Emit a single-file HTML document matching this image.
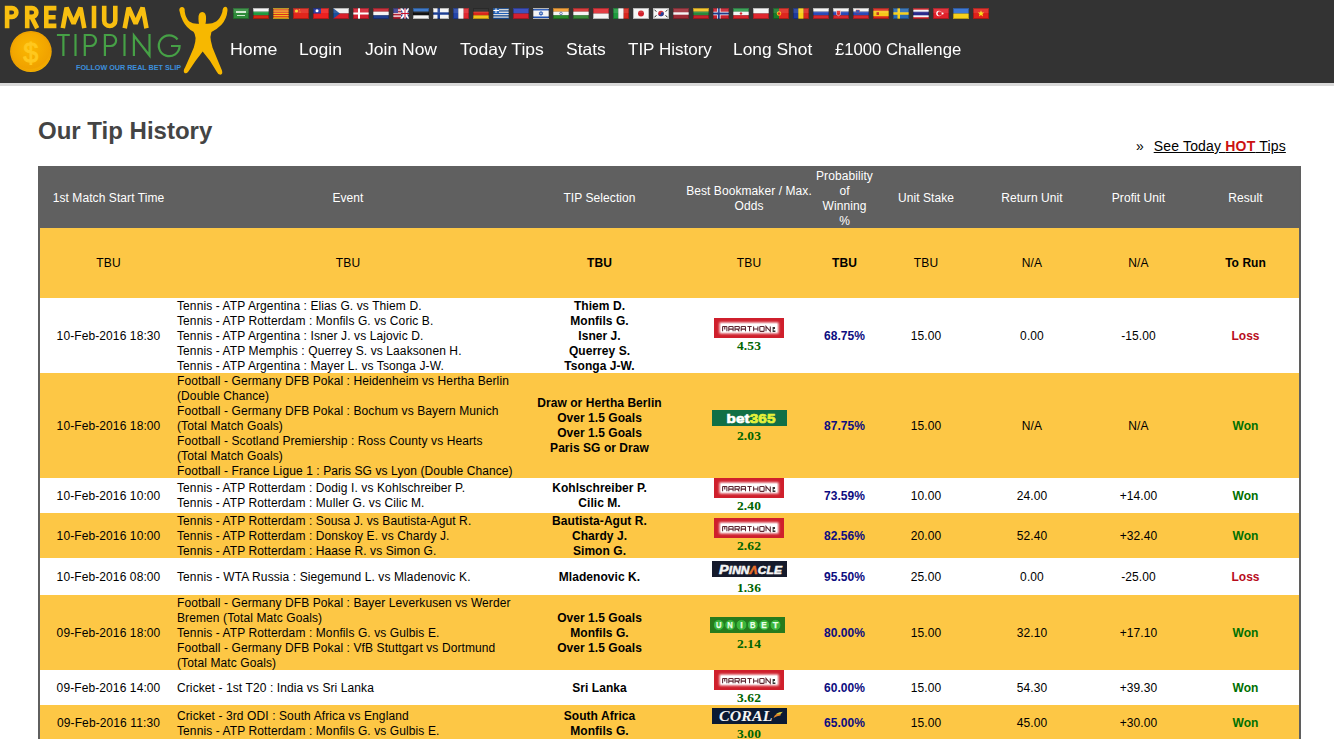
<!DOCTYPE html>
<html><head><meta charset="utf-8"><title>Our Tip History</title>
<style>
*{margin:0;padding:0;box-sizing:border-box}
html,body{width:1334px;height:739px;overflow:hidden;background:#fff;font-family:"Liberation Sans", sans-serif}
#hdr{position:absolute;left:0;top:0;width:1334px;height:83px;background:#333333}
#hline{position:absolute;left:0;top:83px;width:1334px;height:3px;background:#d9d9d9}
.fl{position:absolute;top:8px}
.nv{position:absolute;top:38px;font-size:16.5px;line-height:22px;color:#fff;white-space:nowrap;transform-origin:0 0}
#logo{position:absolute;left:0;top:0}
h1{position:absolute;left:38px;top:116px;font-size:24px;line-height:30px;font-weight:bold;color:#444}
#hot{position:absolute;left:1136px;top:137px;font-size:14px;line-height:18px;color:#000;white-space:nowrap}
#hot a{color:#000;text-decoration:underline;margin-left:6px;letter-spacing:.18px}
#hot b{color:#cc1111}
#tbl{position:absolute;left:38px;top:166px;border-collapse:separate;border-spacing:0;table-layout:fixed;width:1263px;border-left:2px solid #5f5f5f;border-right:2px solid #5f5f5f}
#tbl td,#tbl th{font-size:12px;line-height:15px;text-align:center;vertical-align:top;padding:0;white-space:nowrap;font-weight:normal}
#tbl th{background:#606060;color:#fff;height:62px}
#tbl tr{box-sizing:border-box}
.ry td{background:#fdc745}
.rw td{background:#fff}
#tbl td{color:#000;letter-spacing:.1px}
#tbl th{letter-spacing:.08px}
#tbl td.b,#tbl td.won,#tbl td.loss,#tbl td.pr{letter-spacing:.05px}
#tbl td.ev{text-align:left}
#tbl td.b{font-weight:bold}
#tbl .odds{font-weight:bold;color:#006400;font-family:"Liberation Serif",serif;font-size:13.5px;top:0px}
.c{position:relative;top:1px}
#tbl .p2{padding-left:2px}
#tbl td.pr{font-weight:bold;color:#0c0c80}
#tbl td.won{font-weight:bold;color:#007000}
#tbl td.loss{font-weight:bold;color:#b80c1c}
</style></head><body>
<div id="hdr"><svg id="logo" width="235" height="83" viewBox="0 0 235 83">
<g fill="none" stroke="#f8bf10" stroke-width="4.6" stroke-linejoin="miter" stroke-miterlimit="2">
<path d="M7.1 28.2V8.1H12A4.4 4.4 0 0 1 12 16.9H7.1"/>
<path d="M27.2 28.2V8.1H32A4.4 4.4 0 0 1 32 16.9H27.2M31.5 17L37.2 28.2"/>
<path d="M56.4 8.1H46.3V25.9H56.4M46.3 17.2H55.6"/>
<path d="M62.8 28.2L66.6 7.6L73.6 23.6L80.5 7.6L84.3 28.2"/>
<path d="M94 5.8V28.2"/>
<path d="M104.2 5.8V20.5A5.55 5.55 0 0 0 115.3 20.5V5.8"/>
<path d="M124.7 28.2L128.6 7.6L135.6 23.6L142.6 7.6L146.5 28.2"/>
</g>
<g fill="none" stroke="#46a046" stroke-width="2.2">
<path d="M56.9 35H69.8M63.4 35V56"/>
<path d="M75.5 34V56"/>
<path d="M84.8 56V35H90.5A5.5 5.5 0 0 1 90.5 46H84.8"/>
<path d="M104.9 56V35H110.6A5.5 5.5 0 0 1 110.6 46H104.9"/>
<path d="M124.5 34V56"/>
<path d="M133.9 56V35.5L149.5 55.5V34"/>
<path d="M177.5 39.5A10.4 10.4 0 1 0 179.6 46H171"/>
</g>
<defs><radialGradient id="cg" cx="45%" cy="40%" r="60%"><stop offset="0" stop-color="#fbb800"/><stop offset=".85" stop-color="#f0a200"/><stop offset="1" stop-color="#f7b400"/></radialGradient></defs>
<ellipse cx="30.9" cy="51.5" rx="20.8" ry="20.5" fill="url(#cg)"/>
<ellipse cx="30.9" cy="51.5" rx="19.6" ry="19.3" fill="none" stroke="#e89a00" stroke-width=".8" opacity=".6"/>
<text x="30.8" y="61.5" text-anchor="middle" font-family="Liberation Sans" font-size="27" fill="#ffc81e" stroke="#ffc81e" stroke-width=".9" textLength="15" lengthAdjust="spacingAndGlyphs">$</text>
<text x="76" y="70" font-family="Liberation Sans" font-weight="bold" font-size="7.6" fill="#3d8fdc" textLength="105" lengthAdjust="spacingAndGlyphs">FOLLOW OUR REAL BET SLIP</text>
<svg x="175" y="2" width="60" height="78" viewBox="0 0 568 739"><path fill="#f7b800" d="M40 75Q45 45 70 48Q95 52 92 90Q100 150 135 185Q175 212 228 205Q222 185 222 160Q220 95 258 95Q296 95 294 160Q294 185 288 205Q345 212 390 185Q430 155 448 95Q450 50 475 45Q500 48 497 80Q490 160 440 215Q395 260 345 285Q330 330 340 370Q350 410 355 430Q400 540 445 650Q455 685 430 690Q410 690 395 660Q340 560 262 470Q190 560 125 660Q105 685 88 670Q75 650 95 620Q140 520 178 430Q195 380 195 340Q190 300 175 282Q110 250 75 180Q50 130 40 75Z"/></svg>
</svg><svg class="fl" style="left:233px" width="16" height="11" viewBox="0 0 16 11"><rect width="16" height="11" fill="#0b0"/><rect width="16" height="11" fill="#2e8b3a"/><rect x="3" y="3" width="10" height="2" fill="#cfe8cf"/><rect x="4" y="7" width="8" height="1" fill="#cfe8cf"/><rect width="16" height="5" fill="#fff" opacity=".1"/><rect x=".5" y=".5" width="15" height="10" fill="none" stroke="#000" stroke-opacity=".25"/></svg><svg class="fl" style="left:253px" width="16" height="11" viewBox="0 0 16 11"><rect y="0.00" width="16" height="3.72" fill="#f4f4f4"/><rect y="3.67" width="16" height="3.72" fill="#1f9a3f"/><rect y="7.33" width="16" height="3.72" fill="#d62612"/><rect width="16" height="5" fill="#fff" opacity=".1"/><rect x=".5" y=".5" width="15" height="10" fill="none" stroke="#000" stroke-opacity=".25"/></svg><svg class="fl" style="left:273px" width="16" height="11" viewBox="0 0 16 11"><rect width="16" height="11" fill="#f8c81e"/><rect y="1.30" width="16" height="1.2" fill="#d83020"/><rect y="3.60" width="16" height="1.2" fill="#d83020"/><rect y="5.90" width="16" height="1.2" fill="#d83020"/><rect y="8.20" width="16" height="1.2" fill="#d83020"/><rect width="16" height="5" fill="#fff" opacity=".1"/><rect x=".5" y=".5" width="15" height="10" fill="none" stroke="#000" stroke-opacity=".25"/></svg><svg class="fl" style="left:293px" width="16" height="11" viewBox="0 0 16 11"><rect width="16" height="11" fill="#e0261c"/><circle cx="3.5" cy="3" r="1.6" fill="#f8d020"/><circle cx="6.5" cy="1.8" r=".5" fill="#f8d020"/><circle cx="7" cy="4" r=".5" fill="#f8d020"/><rect width="16" height="5" fill="#fff" opacity=".1"/><rect x=".5" y=".5" width="15" height="10" fill="none" stroke="#000" stroke-opacity=".25"/></svg><svg class="fl" style="left:313px" width="16" height="11" viewBox="0 0 16 11"><rect width="16" height="11" fill="#ec2020"/><rect width="8" height="5.5" fill="#1a2b9a"/><circle cx="4" cy="2.75" r="1.5" fill="#fff"/><rect width="16" height="5" fill="#fff" opacity=".1"/><rect x=".5" y=".5" width="15" height="10" fill="none" stroke="#000" stroke-opacity=".25"/></svg><svg class="fl" style="left:333px" width="16" height="11" viewBox="0 0 16 11"><rect width="16" height="5.5" fill="#f0f0f0"/><rect y="5.5" width="16" height="5.5" fill="#d81e2a"/><path d="M0 0L7 5.5L0 11Z" fill="#1b4f9a"/><rect width="16" height="5" fill="#fff" opacity=".1"/><rect x=".5" y=".5" width="15" height="10" fill="none" stroke="#000" stroke-opacity=".25"/></svg><svg class="fl" style="left:353px" width="16" height="11" viewBox="0 0 16 11"><rect width="16" height="11" fill="#d32030"/><rect x="5" width="2" height="11" fill="#fff"/><rect y="4.5" width="16" height="2" fill="#fff"/><rect width="16" height="5" fill="#fff" opacity=".1"/><rect x=".5" y=".5" width="15" height="10" fill="none" stroke="#000" stroke-opacity=".25"/></svg><svg class="fl" style="left:373px" width="16" height="11" viewBox="0 0 16 11"><rect y="0.00" width="16" height="3.72" fill="#c21e2a"/><rect y="3.67" width="16" height="3.72" fill="#f4f4f4"/><rect y="7.33" width="16" height="3.72" fill="#1f3f8e"/><rect width="16" height="5" fill="#fff" opacity=".1"/><rect x=".5" y=".5" width="15" height="10" fill="none" stroke="#000" stroke-opacity=".25"/></svg><svg class="fl" style="left:393px" width="16" height="11" viewBox="0 0 16 11"><rect width="16" height="11" fill="#d9d9ee"/><rect width="8" height="11" fill="#b22234"/><rect y="1.5" width="8" height="1.2" fill="#fff"/><rect y="4.5" width="8" height="1.2" fill="#fff"/><rect y="7.5" width="8" height="1.2" fill="#fff"/><rect width="5" height="5" fill="#3c3b8e"/><rect x="8" width="8" height="11" fill="#283c8c"/><path d="M8 0L16 11M16 0L8 11" stroke="#fff" stroke-width="2"/><rect x="11" width="2" height="11" fill="#fff"/><rect x="8" y="4.5" width="8" height="2" fill="#fff"/><rect x="11.5" width="1" height="11" fill="#c8102e"/><rect x="8" y="5" width="8" height="1" fill="#c8102e"/><rect width="16" height="5" fill="#fff" opacity=".1"/><rect x=".5" y=".5" width="15" height="10" fill="none" stroke="#000" stroke-opacity=".25"/></svg><svg class="fl" style="left:413px" width="16" height="11" viewBox="0 0 16 11"><rect y="0.00" width="16" height="3.72" fill="#2b6cc4"/><rect y="3.67" width="16" height="3.72" fill="#111"/><rect y="7.33" width="16" height="3.72" fill="#f4f4f4"/><rect width="16" height="5" fill="#fff" opacity=".1"/><rect x=".5" y=".5" width="15" height="10" fill="none" stroke="#000" stroke-opacity=".25"/></svg><svg class="fl" style="left:433px" width="16" height="11" viewBox="0 0 16 11"><rect width="16" height="11" fill="#f4f4f4"/><rect x="4.5" width="2.5" height="11" fill="#1c3f94"/><rect y="4.25" width="16" height="2.5" fill="#1c3f94"/><rect width="16" height="5" fill="#fff" opacity=".1"/><rect x=".5" y=".5" width="15" height="10" fill="none" stroke="#000" stroke-opacity=".25"/></svg><svg class="fl" style="left:453px" width="16" height="11" viewBox="0 0 16 11"><rect x="0.00" width="5.38" height="11" fill="#2445a8"/><rect x="5.33" width="5.38" height="11" fill="#f4f4f4"/><rect x="10.67" width="5.38" height="11" fill="#e0262e"/><rect width="16" height="5" fill="#fff" opacity=".1"/><rect x=".5" y=".5" width="15" height="10" fill="none" stroke="#000" stroke-opacity=".25"/></svg><svg class="fl" style="left:473px" width="16" height="11" viewBox="0 0 16 11"><rect y="0.00" width="16" height="3.72" fill="#222"/><rect y="3.67" width="16" height="3.72" fill="#d8261a"/><rect y="7.33" width="16" height="3.72" fill="#f2c21a"/><rect width="16" height="5" fill="#fff" opacity=".1"/><rect x=".5" y=".5" width="15" height="10" fill="none" stroke="#000" stroke-opacity=".25"/></svg><svg class="fl" style="left:493px" width="16" height="11" viewBox="0 0 16 11"><rect y="0.00" width="16" height="1.27" fill="#1e5fb8"/><rect y="1.22" width="16" height="1.27" fill="#f4f4f4"/><rect y="2.44" width="16" height="1.27" fill="#1e5fb8"/><rect y="3.67" width="16" height="1.27" fill="#f4f4f4"/><rect y="4.89" width="16" height="1.27" fill="#1e5fb8"/><rect y="6.11" width="16" height="1.27" fill="#f4f4f4"/><rect y="7.33" width="16" height="1.27" fill="#1e5fb8"/><rect y="8.56" width="16" height="1.27" fill="#f4f4f4"/><rect y="9.78" width="16" height="1.27" fill="#1e5fb8"/><rect width="6" height="5" fill="#1e5fb8"/><rect x="2.5" width="1" height="5" fill="#fff"/><rect y="2" width="6" height="1" fill="#fff"/><rect width="16" height="5" fill="#fff" opacity=".1"/><rect x=".5" y=".5" width="15" height="10" fill="none" stroke="#000" stroke-opacity=".25"/></svg><svg class="fl" style="left:513px" width="16" height="11" viewBox="0 0 16 11"><rect y="0.00" width="16" height="5.55" fill="#2a3fb8"/><rect y="5.50" width="16" height="5.55" fill="#d42030"/><rect width="16" height="5" fill="#fff" opacity=".1"/><rect x=".5" y=".5" width="15" height="10" fill="none" stroke="#000" stroke-opacity=".25"/></svg><svg class="fl" style="left:533px" width="16" height="11" viewBox="0 0 16 11"><rect width="16" height="11" fill="#f4f4f4"/><rect y="1" width="16" height="1.5" fill="#1c4fb0"/><rect y="8.5" width="16" height="1.5" fill="#1c4fb0"/><path d="M8 3.2L9.8 6.4H6.2ZM8 7.6L9.8 4.4H6.2Z" fill="none" stroke="#1c4fb0" stroke-width=".7"/><rect width="16" height="5" fill="#fff" opacity=".1"/><rect x=".5" y=".5" width="15" height="10" fill="none" stroke="#000" stroke-opacity=".25"/></svg><svg class="fl" style="left:553px" width="16" height="11" viewBox="0 0 16 11"><rect y="0.00" width="16" height="3.72" fill="#f49a2a"/><rect y="3.67" width="16" height="3.72" fill="#f4f4f4"/><rect y="7.33" width="16" height="3.72" fill="#2a8a2a"/><circle cx="8" cy="5.5" r="1.3" fill="none" stroke="#1a3a8a" stroke-width=".6"/><rect width="16" height="5" fill="#fff" opacity=".1"/><rect x=".5" y=".5" width="15" height="10" fill="none" stroke="#000" stroke-opacity=".25"/></svg><svg class="fl" style="left:573px" width="16" height="11" viewBox="0 0 16 11"><rect y="0.00" width="16" height="3.72" fill="#d42a2a"/><rect y="3.67" width="16" height="3.72" fill="#f4f4f4"/><rect y="7.33" width="16" height="3.72" fill="#3a8a3a"/><rect width="16" height="5" fill="#fff" opacity=".1"/><rect x=".5" y=".5" width="15" height="10" fill="none" stroke="#000" stroke-opacity=".25"/></svg><svg class="fl" style="left:593px" width="16" height="11" viewBox="0 0 16 11"><rect y="0.00" width="16" height="5.55" fill="#e0262e"/><rect y="5.50" width="16" height="5.55" fill="#f4f4f4"/><rect width="16" height="5" fill="#fff" opacity=".1"/><rect x=".5" y=".5" width="15" height="10" fill="none" stroke="#000" stroke-opacity=".25"/></svg><svg class="fl" style="left:613px" width="16" height="11" viewBox="0 0 16 11"><rect x="0.00" width="5.38" height="11" fill="#1f9a3f"/><rect x="5.33" width="5.38" height="11" fill="#f4f4f4"/><rect x="10.67" width="5.38" height="11" fill="#d8261e"/><rect width="16" height="5" fill="#fff" opacity=".1"/><rect x=".5" y=".5" width="15" height="10" fill="none" stroke="#000" stroke-opacity=".25"/></svg><svg class="fl" style="left:633px" width="16" height="11" viewBox="0 0 16 11"><rect width="16" height="11" fill="#f6f6f6"/><circle cx="8" cy="5.5" r="3" fill="#d0202a"/><rect width="16" height="5" fill="#fff" opacity=".1"/><rect x=".5" y=".5" width="15" height="10" fill="none" stroke="#000" stroke-opacity=".25"/></svg><svg class="fl" style="left:653px" width="16" height="11" viewBox="0 0 16 11"><rect width="16" height="11" fill="#f6f6f6"/><circle cx="8" cy="5.5" r="2.8" fill="#d0202a"/><path d="M5.2 5.5A1.4 1.4 0 0 0 8 5.5A1.4 1.4 0 0 1 10.8 5.5A2.8 2.8 0 0 1 5.2 5.5Z" fill="#1f3f9a"/><path d="M1.5 2l2 1.5M1.5 9l2-1.5M14.5 2l-2 1.5M14.5 9l-2-1.5" stroke="#222" stroke-width="1"/><rect width="16" height="5" fill="#fff" opacity=".1"/><rect x=".5" y=".5" width="15" height="10" fill="none" stroke="#000" stroke-opacity=".25"/></svg><svg class="fl" style="left:673px" width="16" height="11" viewBox="0 0 16 11"><rect width="16" height="11" fill="#9e2b36"/><rect y="4.3" width="16" height="2.4" fill="#f4f4f4"/><rect width="16" height="5" fill="#fff" opacity=".1"/><rect x=".5" y=".5" width="15" height="10" fill="none" stroke="#000" stroke-opacity=".25"/></svg><svg class="fl" style="left:693px" width="16" height="11" viewBox="0 0 16 11"><rect y="0.00" width="16" height="3.72" fill="#f7c21a"/><rect y="3.67" width="16" height="3.72" fill="#2a8a3a"/><rect y="7.33" width="16" height="3.72" fill="#c8202a"/><rect width="16" height="5" fill="#fff" opacity=".1"/><rect x=".5" y=".5" width="15" height="10" fill="none" stroke="#000" stroke-opacity=".25"/></svg><svg class="fl" style="left:713px" width="16" height="11" viewBox="0 0 16 11"><rect width="16" height="11" fill="#c8202e"/><rect x="4" width="3.5" height="11" fill="#fff"/><rect y="3.75" width="16" height="3.5" fill="#fff"/><rect x="4.75" width="2" height="11" fill="#203a8a"/><rect y="4.5" width="16" height="2" fill="#203a8a"/><rect width="16" height="5" fill="#fff" opacity=".1"/><rect x=".5" y=".5" width="15" height="10" fill="none" stroke="#000" stroke-opacity=".25"/></svg><svg class="fl" style="left:733px" width="16" height="11" viewBox="0 0 16 11"><rect y="0.00" width="16" height="3.72" fill="#2a9a4a"/><rect y="3.67" width="16" height="3.72" fill="#f4f4f4"/><rect y="7.33" width="16" height="3.72" fill="#d8262e"/><circle cx="8" cy="5.5" r="1.2" fill="#d8262e"/><rect width="16" height="5" fill="#fff" opacity=".1"/><rect x=".5" y=".5" width="15" height="10" fill="none" stroke="#000" stroke-opacity=".25"/></svg><svg class="fl" style="left:753px" width="16" height="11" viewBox="0 0 16 11"><rect y="0.00" width="16" height="5.55" fill="#f4f4f4"/><rect y="5.50" width="16" height="5.55" fill="#e0262e"/><rect width="16" height="5" fill="#fff" opacity=".1"/><rect x=".5" y=".5" width="15" height="10" fill="none" stroke="#000" stroke-opacity=".25"/></svg><svg class="fl" style="left:773px" width="16" height="11" viewBox="0 0 16 11"><rect width="16" height="11" fill="#e0261e"/><rect width="6" height="11" fill="#1a7a2a"/><circle cx="6" cy="5.5" r="2.2" fill="#f7c21a"/><circle cx="6" cy="5.5" r="1.3" fill="#d8261e"/><rect width="16" height="5" fill="#fff" opacity=".1"/><rect x=".5" y=".5" width="15" height="10" fill="none" stroke="#000" stroke-opacity=".25"/></svg><svg class="fl" style="left:793px" width="16" height="11" viewBox="0 0 16 11"><rect x="0.00" width="5.38" height="11" fill="#1f3a9a"/><rect x="5.33" width="5.38" height="11" fill="#f7d01a"/><rect x="10.67" width="5.38" height="11" fill="#d8261e"/><rect width="16" height="5" fill="#fff" opacity=".1"/><rect x=".5" y=".5" width="15" height="10" fill="none" stroke="#000" stroke-opacity=".25"/></svg><svg class="fl" style="left:813px" width="16" height="11" viewBox="0 0 16 11"><rect y="0.00" width="16" height="3.72" fill="#f4f4f4"/><rect y="3.67" width="16" height="3.72" fill="#2a4ab8"/><rect y="7.33" width="16" height="3.72" fill="#d8262e"/><rect width="16" height="5" fill="#fff" opacity=".1"/><rect x=".5" y=".5" width="15" height="10" fill="none" stroke="#000" stroke-opacity=".25"/></svg><svg class="fl" style="left:833px" width="16" height="11" viewBox="0 0 16 11"><rect y="0.00" width="16" height="3.72" fill="#f4f4f4"/><rect y="3.67" width="16" height="3.72" fill="#2a4ab8"/><rect y="7.33" width="16" height="3.72" fill="#d8262e"/><path d="M3.5 2.5h4v4q-2 2.5-4 0z" fill="#e02a2a" stroke="#fff" stroke-width=".5"/><rect width="16" height="5" fill="#fff" opacity=".1"/><rect x=".5" y=".5" width="15" height="10" fill="none" stroke="#000" stroke-opacity=".25"/></svg><svg class="fl" style="left:853px" width="16" height="11" viewBox="0 0 16 11"><rect y="0.00" width="16" height="3.72" fill="#f4f4f4"/><rect y="3.67" width="16" height="3.72" fill="#2a4ab8"/><rect y="7.33" width="16" height="3.72" fill="#d8262e"/><path d="M3 2h3.5v2.8q-1.75 1.8-3.5 0z" fill="#1f4ab8" stroke="#d82a2a" stroke-width=".4"/><rect width="16" height="5" fill="#fff" opacity=".1"/><rect x=".5" y=".5" width="15" height="10" fill="none" stroke="#000" stroke-opacity=".25"/></svg><svg class="fl" style="left:873px" width="16" height="11" viewBox="0 0 16 11"><rect width="16" height="11" fill="#d8261e"/><rect y="2.75" width="16" height="5.5" fill="#f7c81a"/><rect x="3.5" y="4" width="2.5" height="3" fill="#c83a1e"/><rect width="16" height="5" fill="#fff" opacity=".1"/><rect x=".5" y=".5" width="15" height="10" fill="none" stroke="#000" stroke-opacity=".25"/></svg><svg class="fl" style="left:893px" width="16" height="11" viewBox="0 0 16 11"><rect width="16" height="11" fill="#2a6ab0"/><rect x="4.5" width="2.5" height="11" fill="#f7d01a"/><rect y="4.25" width="16" height="2.5" fill="#f7d01a"/><rect width="16" height="5" fill="#fff" opacity=".1"/><rect x=".5" y=".5" width="15" height="10" fill="none" stroke="#000" stroke-opacity=".25"/></svg><svg class="fl" style="left:913px" width="16" height="11" viewBox="0 0 16 11"><rect width="16" height="11" fill="#d8262e"/><rect y="1.8" width="16" height="7.4" fill="#f4f4f4"/><rect y="3.7" width="16" height="3.6" fill="#2a2a8a"/><rect width="16" height="5" fill="#fff" opacity=".1"/><rect x=".5" y=".5" width="15" height="10" fill="none" stroke="#000" stroke-opacity=".25"/></svg><svg class="fl" style="left:933px" width="16" height="11" viewBox="0 0 16 11"><rect width="16" height="11" fill="#e0202a"/><circle cx="6" cy="5.5" r="2.8" fill="#fff"/><circle cx="6.8" cy="5.5" r="2.2" fill="#e0202a"/><circle cx="9.6" cy="5.5" r="1" fill="#fff"/><rect width="16" height="5" fill="#fff" opacity=".1"/><rect x=".5" y=".5" width="15" height="10" fill="none" stroke="#000" stroke-opacity=".25"/></svg><svg class="fl" style="left:953px" width="16" height="11" viewBox="0 0 16 11"><rect y="0.00" width="16" height="5.55" fill="#2a6ad0"/><rect y="5.50" width="16" height="5.55" fill="#f7d01a"/><rect width="16" height="5" fill="#fff" opacity=".1"/><rect x=".5" y=".5" width="15" height="10" fill="none" stroke="#000" stroke-opacity=".25"/></svg><svg class="fl" style="left:973px" width="16" height="11" viewBox="0 0 16 11"><rect width="16" height="11" fill="#e0201a"/><path d="M8 2.2L8.9 4.6H11.2L9.4 6.1L10.1 8.5L8 7L5.9 8.5L6.6 6.1L4.8 4.6H7.1Z" fill="#f7e01a"/><rect width="16" height="5" fill="#fff" opacity=".1"/><rect x=".5" y=".5" width="15" height="10" fill="none" stroke="#000" stroke-opacity=".25"/></svg><span class="nv" style="left:229.89px;transform:scaleX(1.0762)">Home</span><span class="nv" style="left:299.11px;transform:scaleX(1.0632)">Login</span><span class="nv" style="left:364.76px;transform:scaleX(1.0612)">Join Now</span><span class="nv" style="left:459.97px;transform:scaleX(1.0623)">Today Tips</span><span class="nv" style="left:565.56px;transform:scaleX(1.0583)">Stats</span><span class="nv" style="left:627.98px;transform:scaleX(1.0312)">TIP History</span><span class="nv" style="left:732.95px;transform:scaleX(1.0541)">Long Shot</span><span class="nv" style="left:834.79px;transform:scaleX(1.0114)">£1000 Challenge</span></div>
<div id="hline"></div>
<h1>Our Tip History</h1>
<div id="hot">&raquo; <a>See Today <b>HOT</b> Tips</a></div>
<table id="tbl">
<colgroup><col style="width:137px"><col style="width:340px"><col style="width:165px"><col style="width:134px"><col style="width:57px"><col style="width:106px"><col style="width:106px"><col style="width:107px"><col style="width:107px"></colgroup>
<tr><th style="padding-top:24px"><div class="c">1st Match Start Time</div></th><th class="p2" style="padding-top:24px"><div class="c">Event</div></th><th style="padding-top:24px"><div class="c">TIP Selection</div></th><th style="padding-top:17px"><div class="c">Best Bookmaker / Max.<br>Odds</div></th><th style="padding-top:2px"><div class="c">Probability<br>of<br>Winning<br>%</div></th><th style="padding-top:24px"><div class="c">Unit Stake</div></th><th style="padding-top:24px"><div class="c">Return Unit</div></th><th style="padding-top:24px"><div class="c">Profit Unit</div></th><th style="padding-top:24px"><div class="c">Result</div></th></tr>
<tr class="ry" style="height:70px"><td style="padding-top:27px"><div class="c">TBU</div></td><td class="p2" style="padding-top:27px"><div class="c">TBU</div></td><td class="b" style="padding-top:27px"><div class="c">TBU</div></td><td style="padding-top:27px"><div class="c">TBU</div></td><td class="b" style="padding-top:27px"><div class="c">TBU</div></td><td style="padding-top:27px"><div class="c">TBU</div></td><td style="padding-top:27px"><div class="c">N/A</div></td><td style="padding-top:27px"><div class="c">N/A</div></td><td class="b" style="padding-top:27px"><div class="c">To Run</div></td></tr>
<tr class="rw" style="height:75px"><td style="padding-top:30px"><div class="c">10-Feb-2016 18:30</div></td><td class="ev" style="padding-top:0px"><div class="c">Tennis - ATP Argentina : Elias G. vs Thiem D.<br>Tennis - ATP Rotterdam : Monfils G. vs Coric B.<br>Tennis - ATP Argentina : Isner J. vs Lajovic D.<br>Tennis - ATP Memphis : Querrey S. vs Laaksonen H.<br>Tennis - ATP Argentina : Mayer L. vs Tsonga J-W.</div></td><td class="b" style="padding-top:0px"><div class="c">Thiem D.<br>Monfils G.<br>Isner J.<br>Querrey S.<br>Tsonga J-W.</div></td><td style="padding-top:20px"><svg width="70" height="20" viewBox="0 0 70 20" style="display:block;margin:0 auto"><defs><filter id="mglow" x="-20%" y="-50%" width="140%" height="200%"><feGaussianBlur stdDeviation="0.9"/></filter></defs><rect width="70" height="20" fill="#cf1f2c"/><rect x="5.5" y="4.5" width="59" height="11" fill="#fff" filter="url(#mglow)"/><rect x="7" y="5.8" width="56" height="8.4" fill="#fff"/><g fill="none" stroke="#5c2630" stroke-width="1.05"><path transform="translate(8.60 8.4) scale(.86 .9)" vector-effect="non-scaling-stroke" d="M0 5.5V0.6Q0 0 .6 0H4.4Q5 0 5 .6V5.5M2.5 0V3.5"/><path transform="translate(14.80 8.4) scale(.86 .9)" vector-effect="non-scaling-stroke" d="M0 5.5V.8Q0 0 .8 0H4.2Q5 0 5 .8V5.5M0 3H5"/><path transform="translate(21.00 8.4) scale(.86 .9)" vector-effect="non-scaling-stroke" d="M0 5.5V0H4.2Q5 0 5 .8V2.2Q5 3 4.2 3H0M2.8 3L5 5.5"/><path transform="translate(27.20 8.4) scale(.86 .9)" vector-effect="non-scaling-stroke" d="M0 5.5V.8Q0 0 .8 0H4.2Q5 0 5 .8V5.5M0 3H5"/><path transform="translate(33.40 8.4) scale(.86 .9)" vector-effect="non-scaling-stroke" d="M0 0H5M2.5 0V5.5"/><path transform="translate(39.60 8.4) scale(.86 .9)" vector-effect="non-scaling-stroke" d="M0 0V5.5M5 0V5.5M0 2.8H5"/><path transform="translate(45.80 8.4) scale(.86 .9)" vector-effect="non-scaling-stroke" d="M.8 0H4.2Q5 0 5 .8V4.7Q5 5.5 4.2 5.5H.8Q0 5.5 0 4.7V.8Q0 0 .8 0Z"/><path transform="translate(52.00 8.4) scale(.86 .9)" vector-effect="non-scaling-stroke" d="M0 5.5V0L5 5.5V0"/></g><path d="M58.6 9h2.4v2h-1.4v1.4h1.8v1.6h-2.8z" fill="#333"/></svg><div class="odds c">4.53</div></td><td class="pr" style="padding-top:30px"><div class="c">68.75%</div></td><td style="padding-top:30px"><div class="c">15.00</div></td><td style="padding-top:30px"><div class="c">0.00</div></td><td style="padding-top:30px"><div class="c">-15.00</div></td><td class="loss" style="padding-top:30px"><div class="c">Loss</div></td></tr><tr class="ry" style="height:105px"><td style="padding-top:45px"><div class="c">10-Feb-2016 18:00</div></td><td class="ev" style="padding-top:0px"><div class="c">Football - Germany DFB Pokal : Heidenheim vs Hertha Berlin<br>(Double Chance)<br>Football - Germany DFB Pokal : Bochum vs Bayern Munich<br>(Total Match Goals)<br>Football - Scotland Premiership : Ross County vs Hearts<br>(Total Match Goals)<br>Football - France Ligue 1 : Paris SG vs Lyon (Double Chance)</div></td><td class="b" style="padding-top:22px"><div class="c">Draw or Hertha Berlin<br>Over 1.5 Goals<br>Over 1.5 Goals<br>Paris SG or Draw</div></td><td style="padding-top:34px"><svg width="75" height="21" viewBox="0 0 75 21" style="display:block;margin:0 auto"><rect y="3" width="75" height="16" fill="#116f46"/><text x="14.5" y="15.8" font-family="Liberation Sans" font-weight="bold" font-size="13.5" fill="#fff" stroke="#fff" stroke-width=".7" textLength="49" lengthAdjust="spacingAndGlyphs">bet<tspan fill="#e6f23a" stroke="#e6f23a">365</tspan></text></svg><div class="odds c">2.03</div></td><td class="pr" style="padding-top:45px"><div class="c">87.75%</div></td><td style="padding-top:45px"><div class="c">15.00</div></td><td style="padding-top:45px"><div class="c">N/A</div></td><td style="padding-top:45px"><div class="c">N/A</div></td><td class="won" style="padding-top:45px"><div class="c">Won</div></td></tr><tr class="rw" style="height:35px"><td style="padding-top:10px"><div class="c">10-Feb-2016 10:00</div></td><td class="ev" style="padding-top:2px"><div class="c">Tennis - ATP Rotterdam : Dodig I. vs Kohlschreiber P.<br>Tennis - ATP Rotterdam : Muller G. vs Cilic M.</div></td><td class="b" style="padding-top:2px"><div class="c">Kohlschreiber P.<br>Cilic M.</div></td><td style="padding-top:0px"><svg width="70" height="20" viewBox="0 0 70 20" style="display:block;margin:0 auto"><defs><filter id="mglow" x="-20%" y="-50%" width="140%" height="200%"><feGaussianBlur stdDeviation="0.9"/></filter></defs><rect width="70" height="20" fill="#cf1f2c"/><rect x="5.5" y="4.5" width="59" height="11" fill="#fff" filter="url(#mglow)"/><rect x="7" y="5.8" width="56" height="8.4" fill="#fff"/><g fill="none" stroke="#5c2630" stroke-width="1.05"><path transform="translate(8.60 8.4) scale(.86 .9)" vector-effect="non-scaling-stroke" d="M0 5.5V0.6Q0 0 .6 0H4.4Q5 0 5 .6V5.5M2.5 0V3.5"/><path transform="translate(14.80 8.4) scale(.86 .9)" vector-effect="non-scaling-stroke" d="M0 5.5V.8Q0 0 .8 0H4.2Q5 0 5 .8V5.5M0 3H5"/><path transform="translate(21.00 8.4) scale(.86 .9)" vector-effect="non-scaling-stroke" d="M0 5.5V0H4.2Q5 0 5 .8V2.2Q5 3 4.2 3H0M2.8 3L5 5.5"/><path transform="translate(27.20 8.4) scale(.86 .9)" vector-effect="non-scaling-stroke" d="M0 5.5V.8Q0 0 .8 0H4.2Q5 0 5 .8V5.5M0 3H5"/><path transform="translate(33.40 8.4) scale(.86 .9)" vector-effect="non-scaling-stroke" d="M0 0H5M2.5 0V5.5"/><path transform="translate(39.60 8.4) scale(.86 .9)" vector-effect="non-scaling-stroke" d="M0 0V5.5M5 0V5.5M0 2.8H5"/><path transform="translate(45.80 8.4) scale(.86 .9)" vector-effect="non-scaling-stroke" d="M.8 0H4.2Q5 0 5 .8V4.7Q5 5.5 4.2 5.5H.8Q0 5.5 0 4.7V.8Q0 0 .8 0Z"/><path transform="translate(52.00 8.4) scale(.86 .9)" vector-effect="non-scaling-stroke" d="M0 5.5V0L5 5.5V0"/></g><path d="M58.6 9h2.4v2h-1.4v1.4h1.8v1.6h-2.8z" fill="#333"/></svg><div class="odds c">2.40</div></td><td class="pr" style="padding-top:10px"><div class="c">73.59%</div></td><td style="padding-top:10px"><div class="c">10.00</div></td><td style="padding-top:10px"><div class="c">24.00</div></td><td style="padding-top:10px"><div class="c">+14.00</div></td><td class="won" style="padding-top:10px"><div class="c">Won</div></td></tr><tr class="ry" style="height:45px"><td style="padding-top:15px"><div class="c">10-Feb-2016 10:00</div></td><td class="ev" style="padding-top:0px"><div class="c">Tennis - ATP Rotterdam : Sousa J. vs Bautista-Agut R.<br>Tennis - ATP Rotterdam : Donskoy E. vs Chardy J.<br>Tennis - ATP Rotterdam : Haase R. vs Simon G.</div></td><td class="b" style="padding-top:0px"><div class="c">Bautista-Agut R.<br>Chardy J.<br>Simon G.</div></td><td style="padding-top:5px"><svg width="70" height="20" viewBox="0 0 70 20" style="display:block;margin:0 auto"><defs><filter id="mglow" x="-20%" y="-50%" width="140%" height="200%"><feGaussianBlur stdDeviation="0.9"/></filter></defs><rect width="70" height="20" fill="#cf1f2c"/><rect x="5.5" y="4.5" width="59" height="11" fill="#fff" filter="url(#mglow)"/><rect x="7" y="5.8" width="56" height="8.4" fill="#fff"/><g fill="none" stroke="#5c2630" stroke-width="1.05"><path transform="translate(8.60 8.4) scale(.86 .9)" vector-effect="non-scaling-stroke" d="M0 5.5V0.6Q0 0 .6 0H4.4Q5 0 5 .6V5.5M2.5 0V3.5"/><path transform="translate(14.80 8.4) scale(.86 .9)" vector-effect="non-scaling-stroke" d="M0 5.5V.8Q0 0 .8 0H4.2Q5 0 5 .8V5.5M0 3H5"/><path transform="translate(21.00 8.4) scale(.86 .9)" vector-effect="non-scaling-stroke" d="M0 5.5V0H4.2Q5 0 5 .8V2.2Q5 3 4.2 3H0M2.8 3L5 5.5"/><path transform="translate(27.20 8.4) scale(.86 .9)" vector-effect="non-scaling-stroke" d="M0 5.5V.8Q0 0 .8 0H4.2Q5 0 5 .8V5.5M0 3H5"/><path transform="translate(33.40 8.4) scale(.86 .9)" vector-effect="non-scaling-stroke" d="M0 0H5M2.5 0V5.5"/><path transform="translate(39.60 8.4) scale(.86 .9)" vector-effect="non-scaling-stroke" d="M0 0V5.5M5 0V5.5M0 2.8H5"/><path transform="translate(45.80 8.4) scale(.86 .9)" vector-effect="non-scaling-stroke" d="M.8 0H4.2Q5 0 5 .8V4.7Q5 5.5 4.2 5.5H.8Q0 5.5 0 4.7V.8Q0 0 .8 0Z"/><path transform="translate(52.00 8.4) scale(.86 .9)" vector-effect="non-scaling-stroke" d="M0 5.5V0L5 5.5V0"/></g><path d="M58.6 9h2.4v2h-1.4v1.4h1.8v1.6h-2.8z" fill="#333"/></svg><div class="odds c">2.62</div></td><td class="pr" style="padding-top:15px"><div class="c">82.56%</div></td><td style="padding-top:15px"><div class="c">20.00</div></td><td style="padding-top:15px"><div class="c">52.40</div></td><td style="padding-top:15px"><div class="c">+32.40</div></td><td class="won" style="padding-top:15px"><div class="c">Won</div></td></tr><tr class="rw" style="height:37px"><td style="padding-top:11px"><div class="c">10-Feb-2016 08:00</div></td><td class="ev" style="padding-top:11px"><div class="c">Tennis - WTA Russia : Siegemund L. vs Mladenovic K.</div></td><td class="b" style="padding-top:11px"><div class="c">Mladenovic K.</div></td><td style="padding-top:0px"><svg width="75" height="22" viewBox="0 0 75 22" style="display:block;margin:0 auto"><rect y="3" width="75" height="16" fill="#151a2b"/><text x="7" y="15.6" font-family="Liberation Sans" font-weight="bold" font-style="italic" font-size="12" fill="#f4f4f4" stroke="#f4f4f4" stroke-width=".5" textLength="63" lengthAdjust="spacingAndGlyphs">P<tspan font-size="10">INN</tspan><tspan fill="#e8702a" stroke="#e8702a" font-size="10">&#923;</tspan><tspan font-size="10">CLE</tspan></text></svg><div class="odds c">1.36</div></td><td class="pr" style="padding-top:11px"><div class="c">95.50%</div></td><td style="padding-top:11px"><div class="c">25.00</div></td><td style="padding-top:11px"><div class="c">0.00</div></td><td style="padding-top:11px"><div class="c">-25.00</div></td><td class="loss" style="padding-top:11px"><div class="c">Loss</div></td></tr><tr class="ry" style="height:75px"><td style="padding-top:30px"><div class="c">09-Feb-2016 18:00</div></td><td class="ev" style="padding-top:0px"><div class="c">Football - Germany DFB Pokal : Bayer Leverkusen vs Werder<br>Bremen (Total Matc Goals)<br>Tennis - ATP Rotterdam : Monfils G. vs Gulbis E.<br>Football - Germany DFB Pokal : VfB Stuttgart vs Dortmund<br>(Total Matc Goals)</div></td><td class="b" style="padding-top:15px"><div class="c">Over 1.5 Goals<br>Monfils G.<br>Over 1.5 Goals</div></td><td style="padding-top:19px"><svg width="75" height="22" viewBox="0 0 75 22" style="display:block;margin:0 auto;position:relative;left:-2px"><rect y="3" width="75" height="16" fill="#287a1c"/><circle cx="8.80" cy="11" r="5.5" fill="#3cb63c" stroke="#1c7d20" stroke-width="1"/><text x="8.80" y="14.3" text-anchor="middle" font-family="Liberation Sans" font-weight="bold" font-size="9" fill="#eaffea" stroke="#eaffea" stroke-width=".25" textLength="5.6" lengthAdjust="spacingAndGlyphs">U</text><circle cx="20.14" cy="11" r="5.5" fill="#3cb63c" stroke="#1c7d20" stroke-width="1"/><text x="20.14" y="14.3" text-anchor="middle" font-family="Liberation Sans" font-weight="bold" font-size="9" fill="#eaffea" stroke="#eaffea" stroke-width=".25" textLength="5.6" lengthAdjust="spacingAndGlyphs">N</text><circle cx="31.48" cy="11" r="5.5" fill="#3cb63c" stroke="#1c7d20" stroke-width="1"/><text x="31.48" y="14.3" text-anchor="middle" font-family="Liberation Sans" font-weight="bold" font-size="9" fill="#eaffea" stroke="#eaffea" stroke-width=".25" textLength="2.6" lengthAdjust="spacingAndGlyphs">I</text><circle cx="42.82" cy="11" r="5.5" fill="#3cb63c" stroke="#1c7d20" stroke-width="1"/><text x="42.82" y="14.3" text-anchor="middle" font-family="Liberation Sans" font-weight="bold" font-size="9" fill="#eaffea" stroke="#eaffea" stroke-width=".25" textLength="5.6" lengthAdjust="spacingAndGlyphs">B</text><circle cx="54.16" cy="11" r="5.5" fill="#3cb63c" stroke="#1c7d20" stroke-width="1"/><text x="54.16" y="14.3" text-anchor="middle" font-family="Liberation Sans" font-weight="bold" font-size="9" fill="#eaffea" stroke="#eaffea" stroke-width=".25" textLength="5.6" lengthAdjust="spacingAndGlyphs">E</text><circle cx="65.50" cy="11" r="5.5" fill="#3cb63c" stroke="#1c7d20" stroke-width="1"/><text x="65.50" y="14.3" text-anchor="middle" font-family="Liberation Sans" font-weight="bold" font-size="9" fill="#eaffea" stroke="#eaffea" stroke-width=".25" textLength="5.6" lengthAdjust="spacingAndGlyphs">T</text></svg><div class="odds c">2.14</div></td><td class="pr" style="padding-top:30px"><div class="c">80.00%</div></td><td style="padding-top:30px"><div class="c">15.00</div></td><td style="padding-top:30px"><div class="c">32.10</div></td><td style="padding-top:30px"><div class="c">+17.10</div></td><td class="won" style="padding-top:30px"><div class="c">Won</div></td></tr><tr class="rw" style="height:35px"><td style="padding-top:10px"><div class="c">09-Feb-2016 14:00</div></td><td class="ev" style="padding-top:10px"><div class="c">Cricket - 1st T20 : India vs Sri Lanka</div></td><td class="b" style="padding-top:10px"><div class="c">Sri Lanka</div></td><td style="padding-top:0px"><svg width="70" height="20" viewBox="0 0 70 20" style="display:block;margin:0 auto"><defs><filter id="mglow" x="-20%" y="-50%" width="140%" height="200%"><feGaussianBlur stdDeviation="0.9"/></filter></defs><rect width="70" height="20" fill="#cf1f2c"/><rect x="5.5" y="4.5" width="59" height="11" fill="#fff" filter="url(#mglow)"/><rect x="7" y="5.8" width="56" height="8.4" fill="#fff"/><g fill="none" stroke="#5c2630" stroke-width="1.05"><path transform="translate(8.60 8.4) scale(.86 .9)" vector-effect="non-scaling-stroke" d="M0 5.5V0.6Q0 0 .6 0H4.4Q5 0 5 .6V5.5M2.5 0V3.5"/><path transform="translate(14.80 8.4) scale(.86 .9)" vector-effect="non-scaling-stroke" d="M0 5.5V.8Q0 0 .8 0H4.2Q5 0 5 .8V5.5M0 3H5"/><path transform="translate(21.00 8.4) scale(.86 .9)" vector-effect="non-scaling-stroke" d="M0 5.5V0H4.2Q5 0 5 .8V2.2Q5 3 4.2 3H0M2.8 3L5 5.5"/><path transform="translate(27.20 8.4) scale(.86 .9)" vector-effect="non-scaling-stroke" d="M0 5.5V.8Q0 0 .8 0H4.2Q5 0 5 .8V5.5M0 3H5"/><path transform="translate(33.40 8.4) scale(.86 .9)" vector-effect="non-scaling-stroke" d="M0 0H5M2.5 0V5.5"/><path transform="translate(39.60 8.4) scale(.86 .9)" vector-effect="non-scaling-stroke" d="M0 0V5.5M5 0V5.5M0 2.8H5"/><path transform="translate(45.80 8.4) scale(.86 .9)" vector-effect="non-scaling-stroke" d="M.8 0H4.2Q5 0 5 .8V4.7Q5 5.5 4.2 5.5H.8Q0 5.5 0 4.7V.8Q0 0 .8 0Z"/><path transform="translate(52.00 8.4) scale(.86 .9)" vector-effect="non-scaling-stroke" d="M0 5.5V0L5 5.5V0"/></g><path d="M58.6 9h2.4v2h-1.4v1.4h1.8v1.6h-2.8z" fill="#333"/></svg><div class="odds c">3.62</div></td><td class="pr" style="padding-top:10px"><div class="c">60.00%</div></td><td style="padding-top:10px"><div class="c">15.00</div></td><td style="padding-top:10px"><div class="c">54.30</div></td><td style="padding-top:10px"><div class="c">+39.30</div></td><td class="won" style="padding-top:10px"><div class="c">Won</div></td></tr><tr class="ry" style="height:36px"><td style="padding-top:10px"><div class="c">09-Feb-2016 11:30</div></td><td class="ev" style="padding-top:3px"><div class="c">Cricket - 3rd ODI : South Africa vs England<br>Tennis - ATP Rotterdam : Monfils G. vs Gulbis E.</div></td><td class="b" style="padding-top:3px"><div class="c">South Africa<br>Monfils G.</div></td><td style="padding-top:0px"><svg width="75" height="21" viewBox="0 0 75 21" style="display:block;margin:0 auto"><rect y="3" width="75" height="16" fill="#0b1a33"/><text x="7" y="15.9" font-family="Liberation Serif" font-weight="bold" font-style="italic" font-size="14.5" fill="#f4f4f4" textLength="53.5" lengthAdjust="spacingAndGlyphs">CORAL</text><path d="M61.5 13Q63 8 70.5 7Q68 9 68.5 10.5Q65 10.5 61.5 13Z" fill="#e0862a"/><path d="M64 9Q66.5 7 70.8 6.8Q69 8.2 68.5 9Z" fill="#c8d040"/></svg><div class="odds c">3.00</div></td><td class="pr" style="padding-top:10px"><div class="c">65.00%</div></td><td style="padding-top:10px"><div class="c">15.00</div></td><td style="padding-top:10px"><div class="c">45.00</div></td><td style="padding-top:10px"><div class="c">+30.00</div></td><td class="won" style="padding-top:10px"><div class="c">Won</div></td></tr>
</table>
</body></html>
